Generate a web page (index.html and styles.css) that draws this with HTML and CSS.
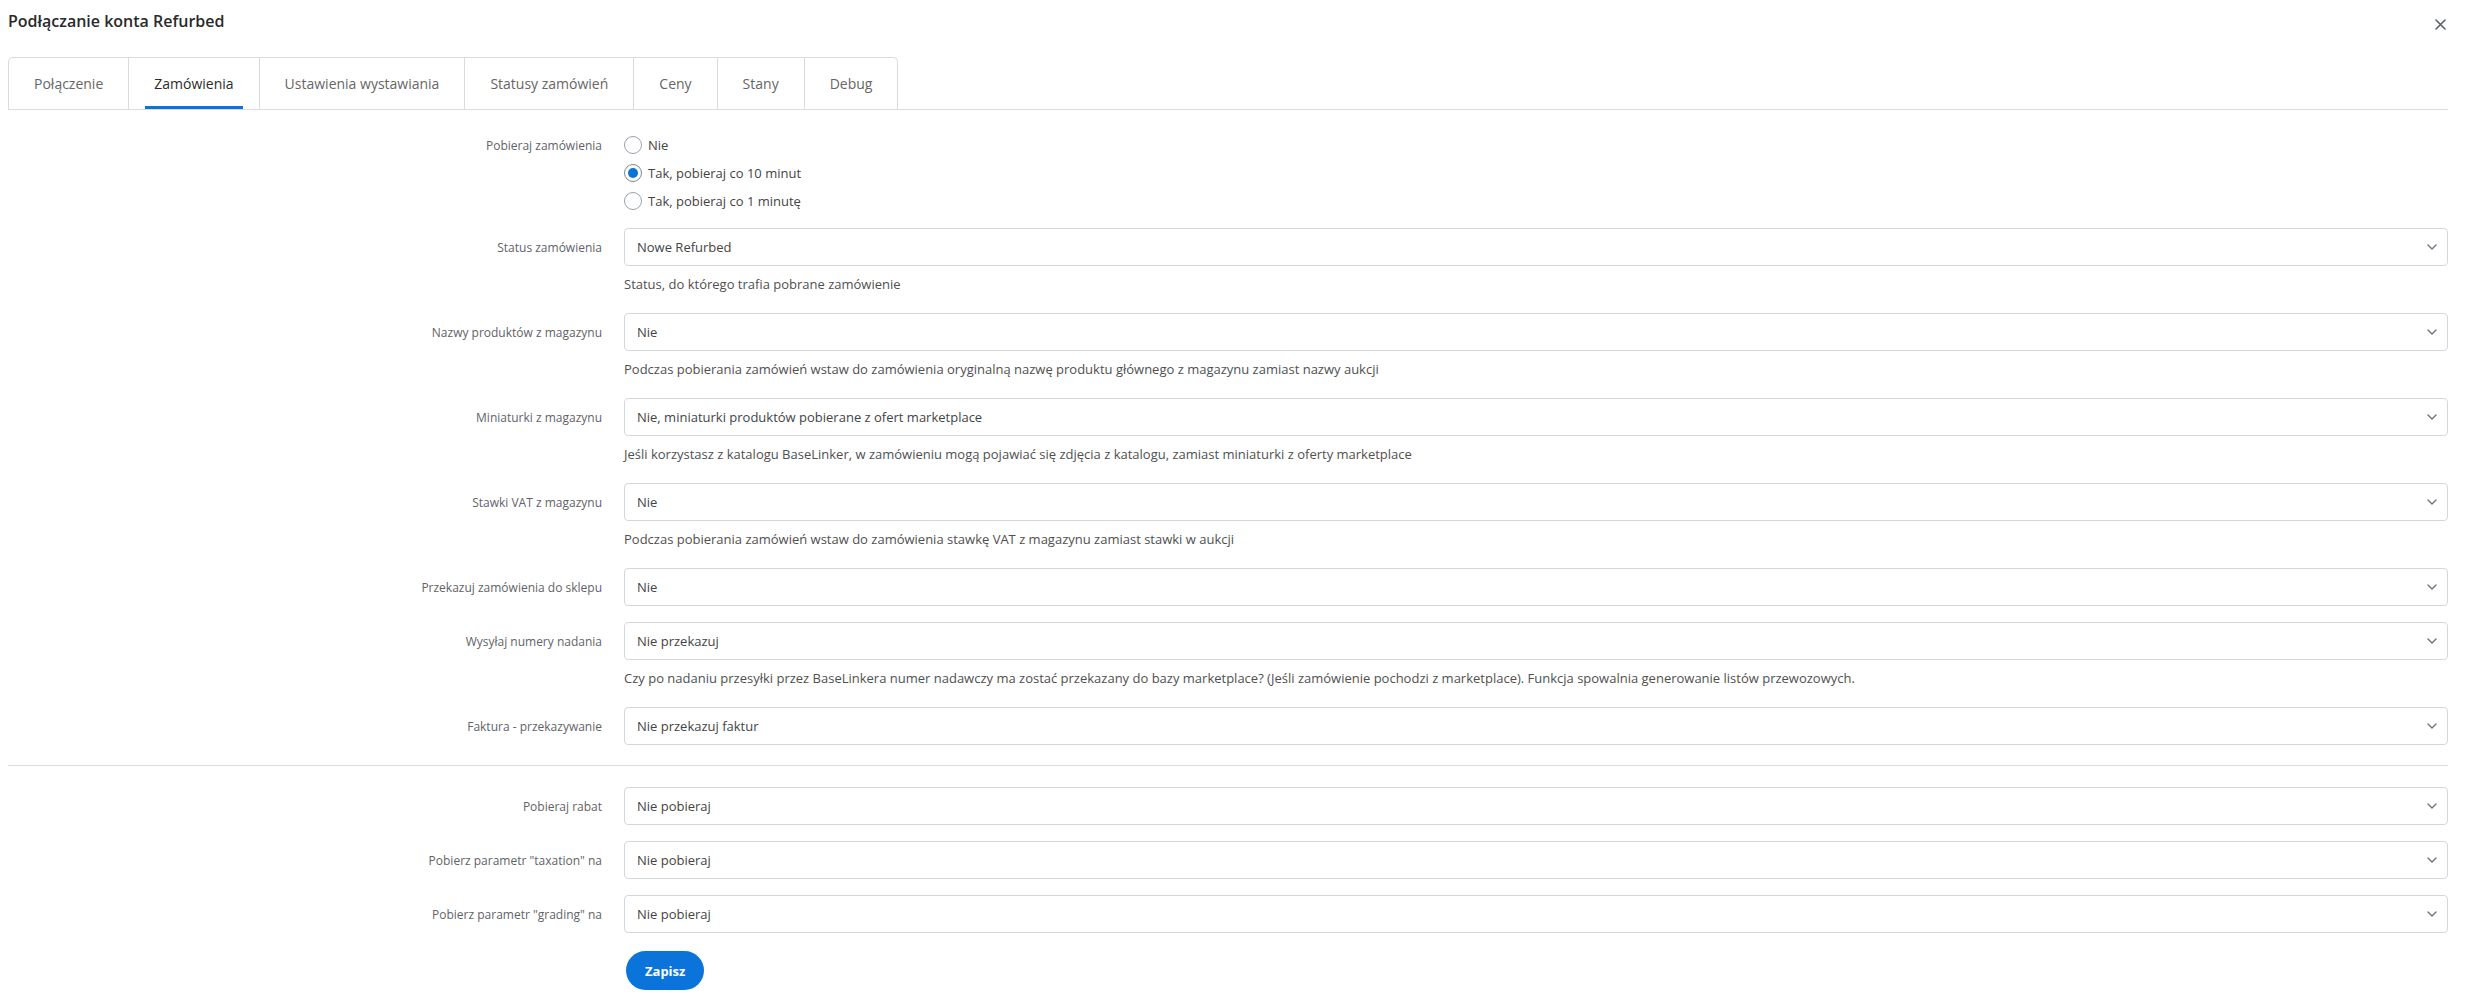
FILE: index.html
```html
<!DOCTYPE html>
<html lang="pl">
<head>
<meta charset="utf-8">
<title>Podłączanie konta Refurbed</title>
<link rel="stylesheet" href="styles.css">
</head>
<body>
<div class="page">
  <header class="header">
    <h1 class="title">Podłączanie konta Refurbed</h1>
    <svg class="close" width="11" height="11" viewBox="0 0 11 11" aria-label="Zamknij"><path d="M1 1L10 10M10 1L1 10" stroke="#5a6068" stroke-width="1.6" stroke-linecap="round"/></svg>
  </header>

  <nav class="tabs-bar">
    <div class="tabs">
      <div class="tab"><span class="tab-label">Połączenie</span></div>
      <div class="tab active"><span class="tab-label">Zamówienia</span></div>
      <div class="tab"><span class="tab-label">Ustawienia wystawiania</span></div>
      <div class="tab"><span class="tab-label">Statusy zamówień</span></div>
      <div class="tab"><span class="tab-label">Ceny</span></div>
      <div class="tab"><span class="tab-label">Stany</span></div>
      <div class="tab"><span class="tab-label">Debug</span></div>
    </div>
  </nav>

  <form class="form">
    <div class="row radio-row">
      <div class="label radio-label">Pobieraj zamówienia</div>
      <div class="control">
        <label class="radio"><span class="radio-dot"></span>Nie</label>
        <label class="radio"><span class="radio-dot checked"></span>Tak, pobieraj co 10 minut</label>
        <label class="radio"><span class="radio-dot"></span>Tak, pobieraj co 1 minutę</label>
      </div>
    </div>

    <div class="row">
      <div class="label">Status zamówienia</div>
      <div class="control">
        <div class="select"><span>Nowe Refurbed</span><svg class="chev" width="10" height="6" viewBox="0 0 10 6"><path d="M1 1L5 5L9 1" fill="none" stroke="#6c757d" stroke-width="1.4" stroke-linecap="round" stroke-linejoin="round"/></svg></div>
        <div class="help">Status, do którego trafia pobrane zamówienie</div>
      </div>
    </div>

    <div class="row">
      <div class="label">Nazwy produktów z magazynu</div>
      <div class="control">
        <div class="select"><span>Nie</span><svg class="chev" width="10" height="6" viewBox="0 0 10 6"><path d="M1 1L5 5L9 1" fill="none" stroke="#6c757d" stroke-width="1.4" stroke-linecap="round" stroke-linejoin="round"/></svg></div>
        <div class="help">Podczas pobierania zamówień wstaw do zamówienia oryginalną nazwę produktu głównego z magazynu zamiast nazwy aukcji</div>
      </div>
    </div>

    <div class="row">
      <div class="label">Miniaturki z magazynu</div>
      <div class="control">
        <div class="select"><span>Nie, miniaturki produktów pobierane z ofert marketplace</span><svg class="chev" width="10" height="6" viewBox="0 0 10 6"><path d="M1 1L5 5L9 1" fill="none" stroke="#6c757d" stroke-width="1.4" stroke-linecap="round" stroke-linejoin="round"/></svg></div>
        <div class="help">Jeśli korzystasz z katalogu BaseLinker, w zamówieniu mogą pojawiać się zdjęcia z katalogu, zamiast miniaturki z oferty marketplace</div>
      </div>
    </div>

    <div class="row">
      <div class="label">Stawki VAT z magazynu</div>
      <div class="control">
        <div class="select"><span>Nie</span><svg class="chev" width="10" height="6" viewBox="0 0 10 6"><path d="M1 1L5 5L9 1" fill="none" stroke="#6c757d" stroke-width="1.4" stroke-linecap="round" stroke-linejoin="round"/></svg></div>
        <div class="help">Podczas pobierania zamówień wstaw do zamówienia stawkę VAT z magazynu zamiast stawki w aukcji</div>
      </div>
    </div>

    <div class="row">
      <div class="label">Przekazuj zamówienia do sklepu</div>
      <div class="control">
        <div class="select"><span>Nie</span><svg class="chev" width="10" height="6" viewBox="0 0 10 6"><path d="M1 1L5 5L9 1" fill="none" stroke="#6c757d" stroke-width="1.4" stroke-linecap="round" stroke-linejoin="round"/></svg></div>
      </div>
    </div>

    <div class="row">
      <div class="label">Wysyłaj numery nadania</div>
      <div class="control">
        <div class="select"><span>Nie przekazuj</span><svg class="chev" width="10" height="6" viewBox="0 0 10 6"><path d="M1 1L5 5L9 1" fill="none" stroke="#6c757d" stroke-width="1.4" stroke-linecap="round" stroke-linejoin="round"/></svg></div>
        <div class="help">Czy po nadaniu przesyłki przez BaseLinkera numer nadawczy ma zostać przekazany do bazy marketplace? (Jeśli zamówienie pochodzi z marketplace). Funkcja spowalnia generowanie listów przewozowych.</div>
      </div>
    </div>

    <div class="row last">
      <div class="label">Faktura - przekazywanie</div>
      <div class="control">
        <div class="select"><span>Nie przekazuj faktur</span><svg class="chev" width="10" height="6" viewBox="0 0 10 6"><path d="M1 1L5 5L9 1" fill="none" stroke="#6c757d" stroke-width="1.4" stroke-linecap="round" stroke-linejoin="round"/></svg></div>
      </div>
    </div>

    <hr class="separator">

    <div class="row">
      <div class="label">Pobieraj rabat</div>
      <div class="control">
        <div class="select"><span>Nie pobieraj</span><svg class="chev" width="10" height="6" viewBox="0 0 10 6"><path d="M1 1L5 5L9 1" fill="none" stroke="#6c757d" stroke-width="1.4" stroke-linecap="round" stroke-linejoin="round"/></svg></div>
      </div>
    </div>

    <div class="row">
      <div class="label">Pobierz parametr "taxation" na</div>
      <div class="control">
        <div class="select"><span>Nie pobieraj</span><svg class="chev" width="10" height="6" viewBox="0 0 10 6"><path d="M1 1L5 5L9 1" fill="none" stroke="#6c757d" stroke-width="1.4" stroke-linecap="round" stroke-linejoin="round"/></svg></div>
      </div>
    </div>

    <div class="row last">
      <div class="label">Pobierz parametr "grading" na</div>
      <div class="control">
        <div class="select"><span>Nie pobieraj</span><svg class="chev" width="10" height="6" viewBox="0 0 10 6"><path d="M1 1L5 5L9 1" fill="none" stroke="#6c757d" stroke-width="1.4" stroke-linecap="round" stroke-linejoin="round"/></svg></div>
      </div>
    </div>

    <div class="row actions">
      <div class="label"></div>
      <div class="control">
        <button type="button" class="btn">Zapisz</button>
      </div>
    </div>
  </form>
</div>
</body>
</html>
```
FILE: styles.css
```css
* { box-sizing: border-box; }

html, body {
  margin: 0;
  padding: 0;
  background: #ffffff;
}

body {
  font-family: "Open Sans", "Noto Sans", "Liberation Sans", sans-serif;
  color: #333;
}

.page {
  padding: 0 17px 0 8px;
}

.header {
  display: flex;
  justify-content: space-between;
  align-items: flex-start;
  height: 57px;
}

.title {
  margin: 10px 0 0 0;
  font-size: 16px;
  line-height: 22px;
  font-weight: 600;
  color: #2a2a2a;
}

.close {
  margin-top: 19px;
  margin-right: 2px;
}

.tabs-bar {
  display: flex;
  border-bottom: 1px solid #d8dce1;
}

.tabs {
  display: flex;
  border: 1px solid #d8dce1;
  border-bottom: none;
  border-radius: 5px 5px 0 0;
}

.tab {
  display: flex;
  height: 51px;
  padding: 0 16px;
  font-size: 14px;
  color: #666;
}

.tab + .tab {
  border-left: 1px solid #d8dce1;
}

.tab-label {
  display: flex;
  align-items: center;
  padding: 3px 9px 0;
  border-bottom: 3px solid transparent;
  white-space: nowrap;
}

.tab.active {
  color: #2b2b2b;
}

.tab.active .tab-label {
  border-bottom-color: #0a74da;
}

.form {
  padding-top: 21px;
}

.row {
  display: grid;
  grid-template-columns: 594px 1fr;
  column-gap: 22px;
  margin-bottom: 16px;
}

.row.radio-row {
  margin-bottom: 13px;
}

.row.last {
  margin-bottom: 0;
}

.label {
  display: flex;
  justify-content: flex-end;
  align-items: center;
  height: 38px;
  font-size: 12px;
  color: #5f6368;
  text-align: right;
  white-space: nowrap;
}

.label.radio-label {
  height: 28px;
}

.control {
  min-width: 0;
}

.radio {
  display: flex;
  align-items: center;
  height: 28px;
  font-size: 13px;
  color: #444;
}

.radio-dot {
  display: flex;
  align-items: center;
  justify-content: center;
  width: 18px;
  height: 18px;
  margin-right: 6px;
  border: 1px solid #9aa1a9;
  border-radius: 50%;
  background: #fff;
}

.radio-dot.checked {
  border-color: #7d8792;
}

.radio-dot.checked::before {
  content: "";
  width: 10px;
  height: 10px;
  border-radius: 50%;
  background: #0a74da;
}

.select {
  display: flex;
  align-items: center;
  justify-content: space-between;
  height: 38px;
  padding: 0 10px 0 12px;
  border: 1px solid #d3d8de;
  border-radius: 4px;
  background: #fff;
  font-size: 13px;
  color: #444;
}

.chev {
  flex: none;
}

.help {
  margin: 8px 0 3px;
  font-size: 13px;
  line-height: 20px;
  color: #505050;
}

.separator {
  margin: 20px 0 21px;
  border: 0;
  border-top: 1px solid #d8dce1;
  height: 0;
}

.actions {
  margin-top: 18px;
}

.actions .label {
  height: 39px;
}

.btn {
  height: 39px;
  margin-left: 2px;
  padding: 0 19px;
  border: 0;
  border-radius: 20px;
  background: #0a74da;
  color: #fff;
  font-family: "Open Sans", "Noto Sans", "Liberation Sans", sans-serif;
  font-size: 13px;
  font-weight: 700;
  cursor: pointer;
}
```
